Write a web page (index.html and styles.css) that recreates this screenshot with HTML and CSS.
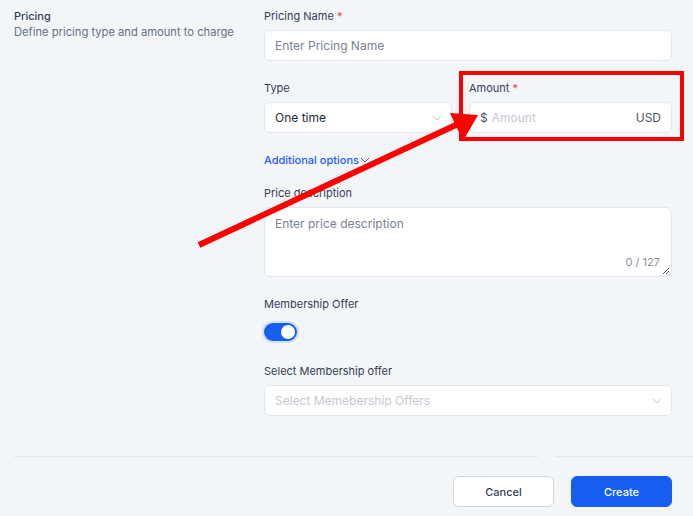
FILE: index.html
```html
<!DOCTYPE html>
<html>
  <head>
    <title>Pricing</title>
    <meta charset="utf-8" />
    <link rel="stylesheet" href="styles.css">
  </head>
  <body>
    <div class="page">
      <div class="section">
        <div class="section-info">
          <div class="section-title">Pricing</div>
          <div class="section-desc">Define pricing type and amount to charge</div>
        </div>

        <div class="section-fields">
          <div class="field">
            <label class="label">Pricing Name <span class="req">*</span></label>
            <div class="input"><span class="placeholder">Enter Pricing Name</span></div>
          </div>

          <div class="field row">
            <div class="col-type">
              <label class="label">Type</label>
              <div class="input select">
                <span class="value">One time</span>
                <svg class="chevron" width="10" height="6" viewBox="0 0 10 6"><path d="M1 1l4 4 4-4" fill="none" stroke="#c3c8d0" stroke-width="1"/></svg>
              </div>
            </div>
            <div class="col-amount">
              <label class="label">Amount <span class="req">*</span></label>
              <div class="input">
                <span class="prefix">$</span>
                <span class="placeholder light">Amount</span>
                <span class="suffix">USD</span>
              </div>
            </div>
          </div>

          <div class="field more">
            <a class="more-link">Additional options<svg width="10" height="6" viewBox="0 0 10 6"><path d="M1 1l4 4 4-4" fill="none" stroke="#2a5bf6" stroke-width="1"/></svg></a>
          </div>

          <div class="field">
            <label class="label">Price description</label>
            <div class="input textarea">
              <span class="placeholder">Enter price description</span>
              <span class="counter">0 / 127</span>
              <svg class="grip" width="8" height="8" viewBox="0 0 8 8"><path d="M7 1L1 7M7 4L4 7" stroke="#555" stroke-width="1"/></svg>
            </div>
          </div>

          <div class="field toggle-field">
            <label class="label">Membership Offer</label>
            <div class="toggle"><span class="knob"></span></div>
          </div>

          <div class="field last">
            <label class="label">Select Membership offer</label>
            <div class="input select">
              <span class="placeholder light">Select Memebership Offers</span>
              <svg class="chevron" width="10" height="6" viewBox="0 0 10 6"><path d="M1 1l4 4 4-4" fill="none" stroke="#c3c8d0" stroke-width="1"/></svg>
            </div>
          </div>
        </div>
      </div>

      <div class="divider">
        <span class="line line-left"></span>
        <span class="line line-right"></span>
      </div>

      <div class="actions">
        <button class="btn btn-cancel">Cancel</button>
        <button class="btn btn-create">Create</button>
      </div>
    </div>

    <!-- annotation drawn over the screenshot -->
    <svg class="annotation" width="693" height="516" viewBox="0 0 693 516">
      <rect x="461" y="73" width="221" height="66" fill="none" stroke="#ff0000" stroke-width="4"/>
      <line x1="199" y1="245" x2="458" y2="124" stroke="#ff0000" stroke-width="6"/>
      <polygon points="478,115 450,113 463,141" fill="#ff0000"/>
    </svg>
  </body>
</html>
```

FILE: styles.css
```css
* {
  box-sizing: border-box;
}

body {
  margin: 0;
  background: #f2f6f9;
  font-family: Inter, "Noto Sans", sans-serif;
  color: #1d2939;
  width: 693px;
  height: 516px;
  overflow: hidden;
  position: relative;
}

.page {
  padding-top: 9px;
}

.section {
  display: grid;
  grid-template-columns: 250px 408px;
  padding-left: 14px;
}

.section-title {
  font-size: 11px;
  line-height: 14px;
  font-weight: 500;
  color: #344054;
}

.section-desc {
  font-size: 11.2px;
  line-height: 14px;
  margin-top: 2px;
  color: #667085;
}

.field {
  margin-bottom: 20px;
}

.field.row {
  display: grid;
  grid-template-columns: 188px 1fr;
  column-gap: 17px;
}

.field.more {
  display: flex;
  height: 14px;
  margin-top: 1px;
  margin-bottom: 19px;
}

.field.toggle-field {
  margin-bottom: 0;
}

.field.last {
  margin-bottom: 0;
}

.label {
  display: block;
  font-size: 11px;
  line-height: 14px;
  color: #344054;
  margin-bottom: 7px;
}

.req {
  color: #f04438;
}

.input {
  height: 31px;
  background: #fff;
  border: 1px solid #e3e7ec;
  border-radius: 6px;
  display: flex;
  align-items: center;
  padding: 0 10px;
  font-size: 12px;
}

.placeholder {
  color: #7a8291;
}

.placeholder.light {
  color: #c4c9d1;
}

.value {
  color: #1d2939;
}

.select {
  justify-content: space-between;
  padding-right: 8px;
}

.chevron {
  margin-right: 1px;
}

.prefix {
  color: #4b5563;
  margin-right: 4px;
}

.suffix {
  margin-left: auto;
  color: #4b5563;
}

.more-link {
  display: flex;
  align-items: center;
  gap: 1px;
  font-size: 11px;
  line-height: 14px;
  color: #2a5bf6;
  font-weight: 500;
}

.textarea {
  height: 70px;
  align-items: flex-start;
  padding-top: 8px;
  position: relative;
}

.counter {
  position: absolute;
  right: 11px;
  bottom: 7px;
  font-size: 11px;
  color: #8a919e;
}

.grip {
  position: absolute;
  right: 1px;
  bottom: 1px;
}

.toggle {
  width: 33px;
  height: 18px;
  margin-top: 12px;
  margin-bottom: 23px;
  border-radius: 9px;
  background: #155eef;
  box-shadow: 0 0 0 2px #d3e0fd;
  position: relative;
}

.knob {
  position: absolute;
  right: 2px;
  top: 2px;
  width: 14px;
  height: 14px;
  border-radius: 50%;
  background: #fff;
}

.divider {
  display: flex;
  gap: 18px;
  padding-left: 14px;
  margin-top: 40px;
}

.line {
  height: 1px;
  background: #e3e7ec;
}

.line-left {
  width: 524px;
}

.line-right {
  flex: 1;
}

.actions {
  display: flex;
  justify-content: flex-end;
  gap: 17px;
  padding-right: 21px;
  margin-top: 19px;
}

.btn {
  width: 101px;
  height: 31px;
  border-radius: 6px;
  font-family: Inter, "Noto Sans", sans-serif;
  font-size: 11px;
  font-weight: 450;
  cursor: pointer;
}

.btn-cancel {
  background: #fff;
  border: 1px solid #d0d5dd;
  color: #344054;
}

.btn-create {
  background: #155eef;
  border: 1px solid #155eef;
  color: #fff;
}

.annotation {
  position: absolute;
  left: 0;
  top: 0;
  pointer-events: none;
}
```
